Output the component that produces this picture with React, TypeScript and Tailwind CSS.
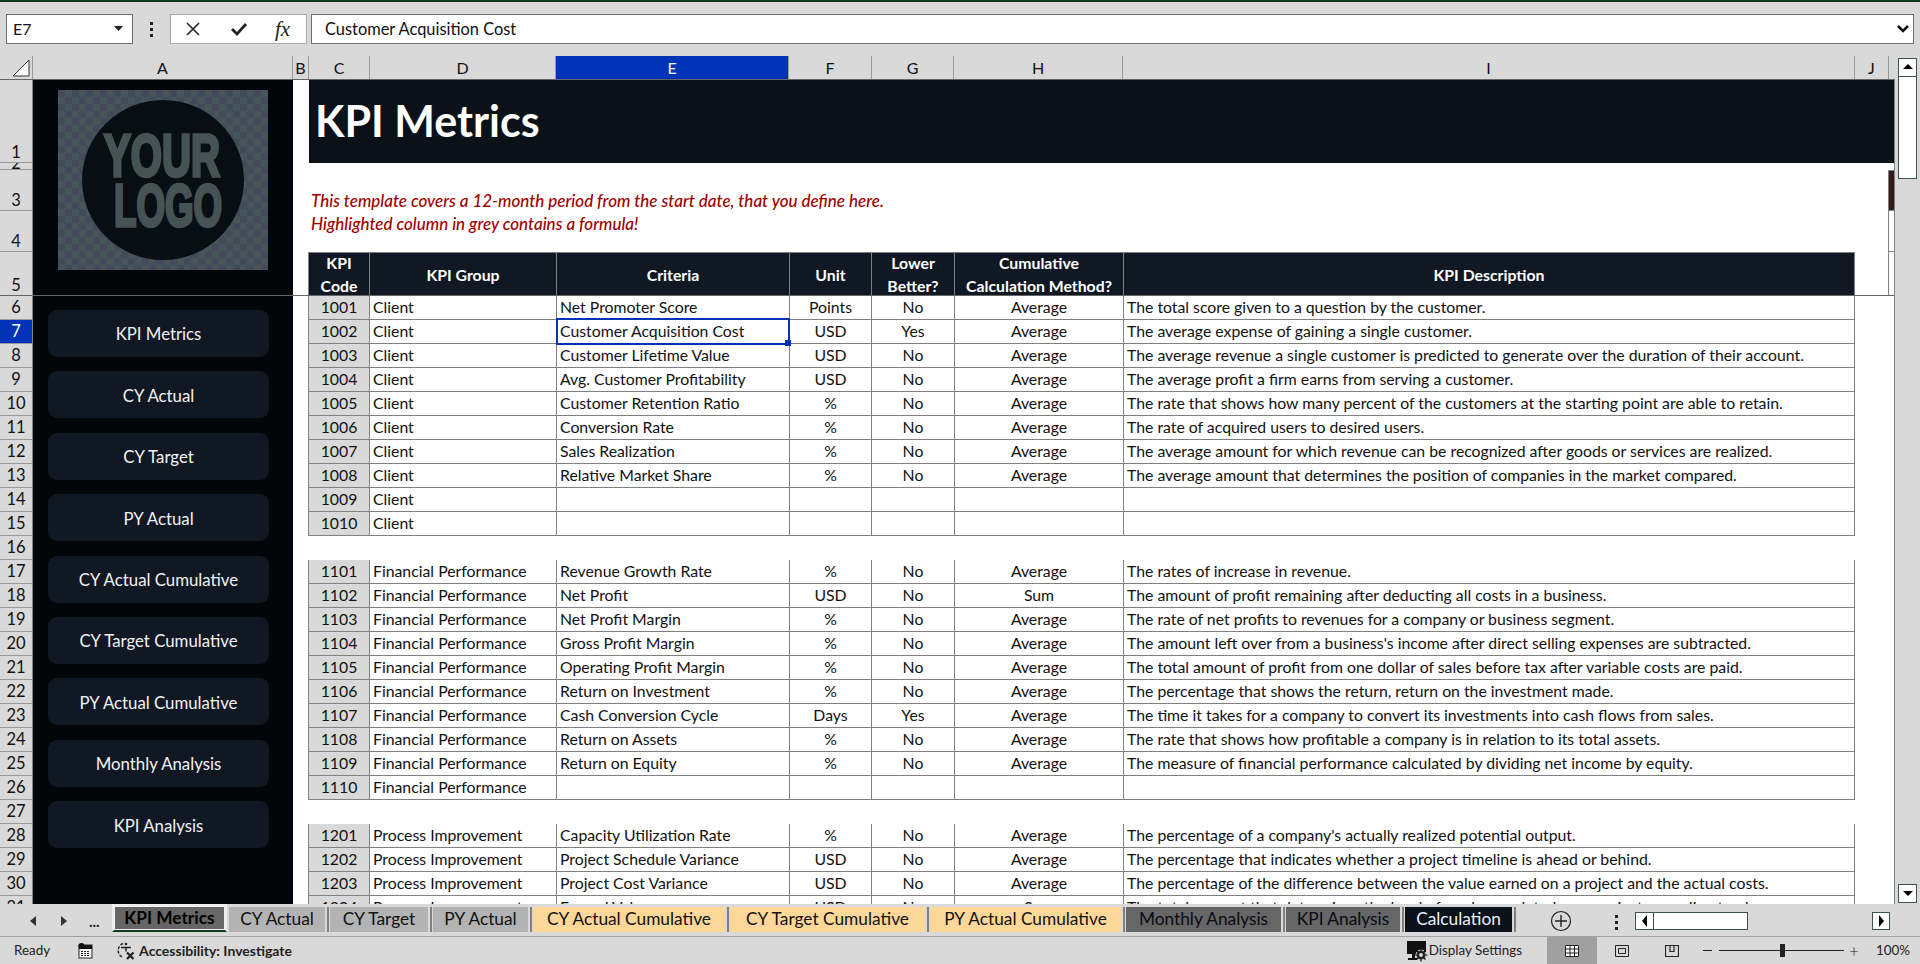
import React from 'react';

type Row = {
  n: number;
  code?: string;
  group?: string;
  criteria?: string;
  unit?: string;
  lower?: string;
  method?: string;
  desc?: string;
};

const client = 'Client';
const fin = 'Financial Performance';
const proc = 'Process Improvement';

const rows: Row[] = [
  { n: 6, code: '1001', group: client, criteria: 'Net Promoter Score', unit: 'Points', lower: 'No', method: 'Average', desc: 'The total score given to a question by the customer.' },
  { n: 7, code: '1002', group: client, criteria: 'Customer Acquisition Cost', unit: 'USD', lower: 'Yes', method: 'Average', desc: 'The average expense of gaining a single customer.' },
  { n: 8, code: '1003', group: client, criteria: 'Customer Lifetime Value', unit: 'USD', lower: 'No', method: 'Average', desc: 'The average revenue a single customer is predicted to generate over the duration of their account.' },
  { n: 9, code: '1004', group: client, criteria: 'Avg. Customer Profitability', unit: 'USD', lower: 'No', method: 'Average', desc: 'The average profit a firm earns from serving a customer.' },
  { n: 10, code: '1005', group: client, criteria: 'Customer Retention Ratio', unit: '%', lower: 'No', method: 'Average', desc: 'The rate that shows how many percent of the customers at the starting point are able to retain.' },
  { n: 11, code: '1006', group: client, criteria: 'Conversion Rate', unit: '%', lower: 'No', method: 'Average', desc: 'The rate of acquired users to desired users.' },
  { n: 12, code: '1007', group: client, criteria: 'Sales Realization', unit: '%', lower: 'No', method: 'Average', desc: 'The average amount for which revenue can be recognized after goods or services are realized.' },
  { n: 13, code: '1008', group: client, criteria: 'Relative Market Share', unit: '%', lower: 'No', method: 'Average', desc: 'The average amount that determines the position of companies in the market compared.' },
  { n: 14, code: '1009', group: client },
  { n: 15, code: '1010', group: client },
  { n: 16 },
  { n: 17, code: '1101', group: fin, criteria: 'Revenue Growth Rate', unit: '%', lower: 'No', method: 'Average', desc: 'The rates of increase in revenue.' },
  { n: 18, code: '1102', group: fin, criteria: 'Net Profit', unit: 'USD', lower: 'No', method: 'Sum', desc: 'The amount of profit remaining after deducting all costs in a business.' },
  { n: 19, code: '1103', group: fin, criteria: 'Net Profit Margin', unit: '%', lower: 'No', method: 'Average', desc: 'The rate of net profits to revenues for a company or business segment.' },
  { n: 20, code: '1104', group: fin, criteria: 'Gross Profit Margin', unit: '%', lower: 'No', method: 'Average', desc: "The amount left over from a business's income after direct selling expenses are subtracted." },
  { n: 21, code: '1105', group: fin, criteria: 'Operating Profit Margin', unit: '%', lower: 'No', method: 'Average', desc: 'The total amount of profit from one dollar of sales before tax after variable costs are paid.' },
  { n: 22, code: '1106', group: fin, criteria: 'Return on Investment', unit: '%', lower: 'No', method: 'Average', desc: 'The percentage that shows the return, return on the investment made.' },
  { n: 23, code: '1107', group: fin, criteria: 'Cash Conversion Cycle', unit: 'Days', lower: 'Yes', method: 'Average', desc: 'The time it takes for a company to convert its investments into cash flows from sales.' },
  { n: 24, code: '1108', group: fin, criteria: 'Return on Assets', unit: '%', lower: 'No', method: 'Average', desc: 'The rate that shows how profitable a company is in relation to its total assets.' },
  { n: 25, code: '1109', group: fin, criteria: 'Return on Equity', unit: '%', lower: 'No', method: 'Average', desc: 'The measure of financial performance calculated by dividing net income by equity.' },
  { n: 26, code: '1110', group: fin },
  { n: 27 },
  { n: 28, code: '1201', group: proc, criteria: 'Capacity Utilization Rate', unit: '%', lower: 'No', method: 'Average', desc: "The percentage of a company's actually realized potential output." },
  { n: 29, code: '1202', group: proc, criteria: 'Project Schedule Variance', unit: 'USD', lower: 'No', method: 'Average', desc: 'The percentage that indicates whether a project timeline is ahead or behind.' },
  { n: 30, code: '1203', group: proc, criteria: 'Project Cost Variance', unit: 'USD', lower: 'No', method: 'Average', desc: 'The percentage of the difference between the value earned on a project and the actual costs.' },
  { n: 31, code: '1204', group: proc, criteria: 'Earned Value', unit: 'USD', lower: 'No', method: 'Sum', desc: 'The total amount that determines the level of work completed on a project according to plan.' },
];

const navButtons = ['KPI Metrics', 'CY Actual', 'CY Target', 'PY Actual', 'CY Actual Cumulative', 'CY Target Cumulative', 'PY Actual Cumulative', 'Monthly Analysis', 'KPI Analysis'];

const tabs = [
  { label: 'CY Actual', cls: 'w-[96px] bg-[#b3b3b3] text-[#111]' },
  { label: 'CY Target', cls: 'w-[98px] bg-[#b3b3b3] text-[#111]' },
  { label: 'PY Actual', cls: 'w-[95px] bg-[#b3b3b3] text-[#111]' },
  { label: 'CY Actual Cumulative', cls: 'w-[192px] bg-[#ffd899] text-[#111]' },
  { label: 'CY Target Cumulative', cls: 'w-[195px] bg-[#ffd899] text-[#111]' },
  { label: 'PY Actual Cumulative', cls: 'w-[191px] bg-[#ffd899] text-[#111]' },
  { label: 'Monthly Analysis', cls: 'w-[155px] bg-[#666666] text-[#0a0a14]' },
  { label: 'KPI Analysis', cls: 'w-[114px] bg-[#666666] text-[#0a0a14]' },
  { label: 'Calculation', cls: 'w-[107px] bg-[#0a1119] text-[#e8f2ff]' },
];

const colHeaders = [
  { label: 'A', cls: 'w-[260px]' },
  { label: 'B', cls: 'w-[16px]' },
  { label: 'C', cls: 'w-[61px]' },
  { label: 'D', cls: 'w-[186px]' },
  { label: 'E', cls: 'w-[233px] bg-[#0033b8] text-white' },
  { label: 'F', cls: 'w-[83px]' },
  { label: 'G', cls: 'w-[82px]' },
  { label: 'H', cls: 'w-[169px]' },
  { label: 'I', cls: 'w-[732px]' },
  { label: 'J', cls: 'w-[34px]' },
];

const gridCols = 'grid grid-cols-[62px_187px_233px_82px_83px_169px_731px] w-[1547px]';

function Cell({ children, cls = '' }: { children?: React.ReactNode; cls?: string }) {
  return (
    <div className={`flex h-6 items-center whitespace-nowrap border-r border-b border-[#808080] px-[3px] pb-px ${cls}`}>
      {children}
    </div>
  );
}

function DataRow({ row }: { row: Row }) {
  if (!row.code) return <div className="h-6" />;
  return (
    <div className={gridCols}>
      <Cell cls="justify-center border-l bg-[#d9d9d9]">{row.code}</Cell>
      <Cell>{row.group}</Cell>
      <Cell cls="relative">
        {row.criteria}
        {row.n === 7 && (
          <span className="absolute -top-[2px] -left-px -right-px -bottom-[2px] z-10 border-[2px] border-[#0033b8]">
            <span className="absolute -right-[3px] -bottom-[3px] h-[6px] w-[6px] bg-[#0033b8]" />
          </span>
        )}
      </Cell>
      <Cell cls="justify-center">{row.unit}</Cell>
      <Cell cls="justify-center">{row.lower}</Cell>
      <Cell cls="justify-center">{row.method}</Cell>
      <Cell>{row.desc}</Cell>
    </div>
  );
}

function HeaderCell({ children, cls = '' }: { children: React.ReactNode; cls?: string }) {
  return (
    <div className={`flex h-[43px] items-center justify-center border-t border-r border-[#808080] bg-[#101823] text-center font-bold leading-[23px] text-white ${cls}`}>
      {children}
    </div>
  );
}

function Logo() {
  return (
    <svg width="210" height="180" viewBox="0 0 210 180">
      <defs>
        <pattern id="checks" width="14" height="14" patternUnits="userSpaceOnUse">
          <rect width="14" height="14" fill="#465559" />
          <rect width="7" height="7" fill="#434a5a" />
          <rect x="7" y="7" width="7" height="7" fill="#434a5a" />
        </pattern>
      </defs>
      <rect width="210" height="180" fill="url(#checks)" />
      <ellipse cx="105" cy="90" rx="81" ry="80" fill="#070e14" />
      <g fill="#465355" stroke="#465355" strokeWidth="3.5" fontFamily="'Liberation Sans', sans-serif" fontWeight="700" fontSize="60">
        <text x="46" y="86" textLength="116" lengthAdjust="spacingAndGlyphs">YOUR</text>
        <text x="56" y="136" textLength="108" lengthAdjust="spacingAndGlyphs">LOGO</text>
      </g>
    </svg>
  );
}

function ArrowBtn({ dir, cls = '' }: { dir: 'up' | 'down' | 'left' | 'right'; cls?: string }) {
  const pts = { up: '2,8 12,8 7,3', down: '2,4 12,4 7,9', left: '9,1 9,13 4,7', right: '5,1 5,13 10,7' }[dir];
  return (
    <div className={`flex items-center justify-center border border-[#3f5153] bg-white ${cls}`}>
      <svg width="14" height="14" viewBox="0 0 14 14">
        <polygon points={pts} fill="#000" />
      </svg>
    </div>
  );
}

function MacroIcon() {
  return (
    <svg width="15" height="16" viewBox="0 0 15 16" className="ml-[28px]">
      <rect x="1" y="2" width="13" height="13" fill="#fff" stroke="#222" />
      <rect x="1" y="2" width="13" height="4" fill="#111" />
      <circle cx="3.5" cy="3" r="3" fill="#111" />
      <path d="M3 8.5h9M3 10.5h9M3 12.5h9" stroke="#222" strokeDasharray="2 1" />
    </svg>
  );
}

function AccessIcon() {
  return (
    <svg width="20" height="20" viewBox="0 0 20 20" className="ml-[23px]" fill="none" stroke="#222" strokeWidth="1.4">
      <path d="M7 2.5a7.5 7.5 0 0 0 0 14" strokeDasharray="3 1.5" />
      <circle cx="10" cy="3" r="1.3" fill="#222" stroke="none" />
      <path d="M5 6.5h10M10 6.5v4" />
      <path d="M11 11.5l6.5 6.5M17.5 11.5L11 18" strokeWidth="2.2" />
    </svg>
  );
}

function DisplayIcon() {
  return (
    <svg width="21" height="22" viewBox="0 0 21 22">
      <rect x="0" y="1" width="19" height="13" fill="#111" />
      <rect x="5" y="14" width="3" height="4" fill="#111" />
      <rect x="1" y="18" width="9" height="2" fill="#111" />
      <circle cx="14" cy="15" r="5" fill="#333" stroke="#d9d9d9" />
      <path d="M14 8.5v13M7.5 15h13M9.5 10.5l9 9M18.5 10.5l-9 9" stroke="#111" strokeWidth="1.2" />
      <circle cx="14" cy="15" r="2" fill="#d9d9d9" />
    </svg>
  );
}

export default function App() {
  return (
    <div className="flex h-[964px] w-[1920px] flex-col overflow-hidden bg-[#d9d9d9] font-['Lato','Liberation_Sans',sans-serif] text-[15.8px] text-[#111]">
      <div className="h-[2px] shrink-0 bg-[#0b3a1e]" />

      {/* formula bar */}
      <div className="flex h-[54px] shrink-0 items-start pt-[12px] pl-[6px]">
        <div className="flex h-[30px] w-[127px] items-center justify-between border border-[#6f6f6f] bg-white pr-[9px] pl-[6px] text-[16px]">
          <span>E7</span>
          <svg width="9" height="6" viewBox="0 0 9 6"><polygon points="0,0 9,0 4.5,5" fill="#222" /></svg>
        </div>
        <div className="flex h-[30px] w-[37px] flex-col items-center justify-center gap-[3px]">
          <span className="h-[3px] w-[3px] bg-[#222]" />
          <span className="h-[3px] w-[3px] bg-[#222]" />
          <span className="h-[3px] w-[3px] bg-[#222]" />
        </div>
        <div className="flex h-[30px] w-[137px] items-center border border-[#aaaaaa] bg-white pl-[14px]">
          <svg width="16" height="16" viewBox="0 0 16 16"><path d="M2 2l12 12M14 2L2 14" stroke="#222" strokeWidth="1.6" /></svg>
          <svg width="18" height="16" viewBox="0 0 18 16" className="ml-[29px]"><path d="M2 8l5 5L16 3" fill="none" stroke="#222" strokeWidth="2.8" /></svg>
          <span className="ml-[27px] font-['Liberation_Serif',serif] text-[21px] italic leading-none text-[#222]">fx</span>
        </div>
        <div className="ml-[4px] flex h-[30px] w-[1603px] items-center justify-between border border-[#6f6f6f] bg-white pr-[4px] pl-[13px] text-[16.4px]">
          <span>Customer Acquisition Cost</span>
          <svg width="12" height="8" viewBox="0 0 12 8"><path d="M1 1l5 5 5-5" fill="none" stroke="#111" strokeWidth="2.6" /></svg>
        </div>
      </div>

      {/* sheet */}
      <div className="flex h-[848px] shrink-0">
        <div className="flex w-[1895px] shrink-0 flex-col">
          <div className="flex h-6 shrink-0 border-b border-[#666666] text-[16px]">
            <div className="flex w-[33px] shrink-0 items-end justify-end border-r border-[#9a9a9a] pr-[2px] pb-[2px]">
              <svg width="18" height="18" viewBox="0 0 18 18"><polygon points="1,17 17,17 17,1" fill="#fff" stroke="#333" /></svg>
            </div>
            {colHeaders.map((c) => (
              <div key={c.label} className={`flex shrink-0 items-center justify-center border-r border-[#9a9a9a] ${c.cls}`}>
                {c.label}
              </div>
            ))}
          </div>

          <div className="flex h-[824px] overflow-hidden">
            {/* row numbers */}
            <div className="w-[33px] shrink-0 border-r border-[#8a8a8a] text-[16.5px]">
              <div className="flex h-[83px] items-end justify-center border-b border-[#9a9a9a] leading-[19px]">1</div>
              <div className="flex h-[7px] justify-center overflow-hidden border-b border-[#9a9a9a] leading-[1px]">2</div>
              <div className="flex h-[41px] items-end justify-center border-b border-[#9a9a9a] leading-[19px]">3</div>
              <div className="flex h-[41px] items-end justify-center border-b border-[#9a9a9a] leading-[19px]">4</div>
              <div className="flex h-[44px] items-end justify-center border-b border-[#666666] leading-[19px]">5</div>
              {rows.map((r) => (
                <div key={r.n} className={`flex h-6 items-center justify-center border-b border-[#9a9a9a] ${r.n === 7 ? 'bg-[#0033b8] text-white' : ''}`}>
                  {r.n}
                </div>
              ))}
            </div>

            {/* sidebar */}
            <div className="w-[260px] shrink-0 bg-[#020608]">
              <div className="h-[216px] border-b border-[#666666] pt-[10px] pl-[25px]">
                <Logo />
              </div>
              <div className="flex flex-col gap-[14.4px] pt-[14px] pl-[15px]">
                {navButtons.map((b) => (
                  <div key={b} className="flex h-[47px] w-[221px] items-center justify-center rounded-[9px] bg-[#101823] pt-px text-[16.8px] text-[#f2f2f2]">
                    {b}
                  </div>
                ))}
              </div>
            </div>

            {/* worksheet */}
            <div className="w-[1602px] shrink-0 border-r border-[#808080] bg-white">
              <div className="h-[216px] border-b border-[#666666]">
                <div className="ml-[16px] flex h-[83px] items-center bg-[#0a1119] pl-[6px] text-[43px] font-bold text-white">
                  KPI Metrics
                </div>
                <div className="flex h-[132px]">
                  <div className="w-[1595px] shrink-0">
                    <div className="h-[89px] pt-[26px] pl-[18px] text-[17px] font-medium italic leading-[23px] text-[#a00000]">
                      <div>This template covers a 12-month period from the start date, that you define here.</div>
                      <div>Highlighted column in grey contains a formula!</div>
                    </div>
                    <div className={`${gridCols} ml-[15px]`}>
                      <HeaderCell cls="border-l">KPI<br />Code</HeaderCell>
                      <HeaderCell>KPI Group</HeaderCell>
                      <HeaderCell>Criteria</HeaderCell>
                      <HeaderCell>Unit</HeaderCell>
                      <HeaderCell>Lower<br />Better?</HeaderCell>
                      <HeaderCell>Cumulative<br />Calculation Method?</HeaderCell>
                      <HeaderCell>KPI Description</HeaderCell>
                    </div>
                  </div>
                  <div className="flex-1 pt-[7px]">
                    <div className="h-[41px] border-t border-b border-l border-[#808080] bg-[#331a1a]" />
                    <div className="h-[41px] border-b border-l border-[#808080]" />
                    <div className="h-[43px] border-l border-[#808080]" />
                  </div>
                </div>
              </div>
              <div className="pl-[15px]">
                {rows.map((r) => (
                  <DataRow key={r.n} row={r} />
                ))}
              </div>
            </div>
          </div>
        </div>

        {/* vertical scrollbar */}
        <div className="flex flex-1 flex-col pt-[2px] pr-[3px] pb-[1px] pl-[3px]">
          <ArrowBtn dir="up" cls="h-[19px]" />
          <div className="h-[102px] border border-t-0 border-[#3f5153] bg-white" />
          <div className="flex-1" />
          <ArrowBtn dir="down" cls="h-[19px]" />
        </div>
      </div>

      {/* sheet tabs */}
      <div className="flex h-[33px] shrink-0 items-start border-b border-[#a0a0a0] text-[17.3px]">
        <div className="flex h-[32px] w-[112px] shrink-0 items-center pt-[2px] pl-[29px] text-[#222]">
          <svg width="8" height="12" viewBox="0 0 8 12"><polygon points="7,1 7,11 1,6" fill="#333" /></svg>
          <svg width="8" height="12" viewBox="0 0 8 12" className="ml-[23px]"><polygon points="1,1 1,11 7,6" fill="#333" /></svg>
          <span className="ml-[21px] text-[15px] font-bold leading-none">...</span>
        </div>
        <div className="flex h-[28px] w-[115px] shrink-0 items-center justify-center border-x-[2px] border-t-[2px] border-[#eeeeee] border-b-[2px] border-b-[#0b3a1e] bg-[#666666] font-bold text-black shadow-[inset_0_0_0_1px_#f2f2f2]">
          KPI Metrics
        </div>
        <div className="ml-[2px] flex items-start pt-[3px]">
          {tabs.map((t) => (
            <React.Fragment key={t.label}>
              <div className={`flex h-[25px] shrink-0 items-center justify-center pb-[2px] ${t.cls}`}>{t.label}</div>
              <div className="mx-[1.5px] h-[25px] w-[2px] shrink-0 bg-[#808080]" />
            </React.Fragment>
          ))}
        </div>
        <svg width="22" height="22" viewBox="0 0 22 22" className="mt-[6px] ml-[33px] shrink-0">
          <circle cx="11" cy="11" r="9.5" fill="none" stroke="#222" strokeWidth="1.2" />
          <path d="M11 5v12M5 11h12" stroke="#222" strokeWidth="1.4" />
        </svg>
        <div className="mt-[11px] ml-[43px] flex shrink-0 flex-col gap-[3px]">
          <span className="h-[3px] w-[3px] bg-[#222]" />
          <span className="h-[3px] w-[3px] bg-[#222]" />
          <span className="h-[3px] w-[3px] bg-[#222]" />
        </div>
        <div className="mt-[8px] ml-[17px] flex h-[18px] w-[255px] shrink-0 justify-between">
          <div className="flex">
            <ArrowBtn dir="left" cls="w-[19px]" />
            <div className="w-[94px] border border-l-0 border-[#3f5153] bg-white" />
          </div>
          <ArrowBtn dir="right" cls="w-[18px]" />
        </div>
      </div>

      {/* status bar */}
      <div className="flex h-[27px] shrink-0 items-center text-[13.4px] text-[#222]">
        <span className="pl-[14px]">Ready</span>
        <MacroIcon />
        <AccessIcon />
        <span className="ml-[3px] text-[14px] font-bold">Accessibility: Investigate</span>
        <div className="ml-auto flex h-full items-center">
          <DisplayIcon />
          <span className="ml-[1px]">Display Settings</span>
          <div className="ml-[25px] flex h-full w-[50px] items-center justify-center bg-[#a0a0a0]">
            <svg width="14" height="12" viewBox="0 0 14 12"><rect x="0" y="0" width="14" height="12" fill="#fff" /><path d="M.5 .5h13v11H.5zM.5 4h13M.5 8h13M5 .5v11M9.5 .5v11" fill="none" stroke="#222" /></svg>
          </div>
          <svg width="14" height="12" viewBox="0 0 14 12" className="ml-[18px]"><path d="M.5 .5h13v11H.5z" fill="none" stroke="#222" /><path d="M3.5 3.5h7v5h-7z" fill="none" stroke="#222" /></svg>
          <svg width="14" height="12" viewBox="0 0 14 12" className="ml-[36px]"><path d="M.5 .5h13v11H.5zM5 .5v6h4v-6" fill="none" stroke="#222" strokeWidth="1.2" /></svg>
          <span className="ml-[24px] h-px w-[9px] bg-[#222]" />
          <div className="ml-[7px] flex h-full w-[125px] items-center">
            <div className="h-px w-[61px] bg-[#222]" />
            <div className="h-[13px] w-[5px] bg-[#222]" />
            <div className="h-px flex-1 bg-[#222]" />
          </div>
          <span className="ml-[5px] w-[10px] text-[17px] font-light leading-none">+</span>
          <span className="mr-[10px] ml-[17px]">100%</span>
        </div>
      </div>
    </div>
  );
}
